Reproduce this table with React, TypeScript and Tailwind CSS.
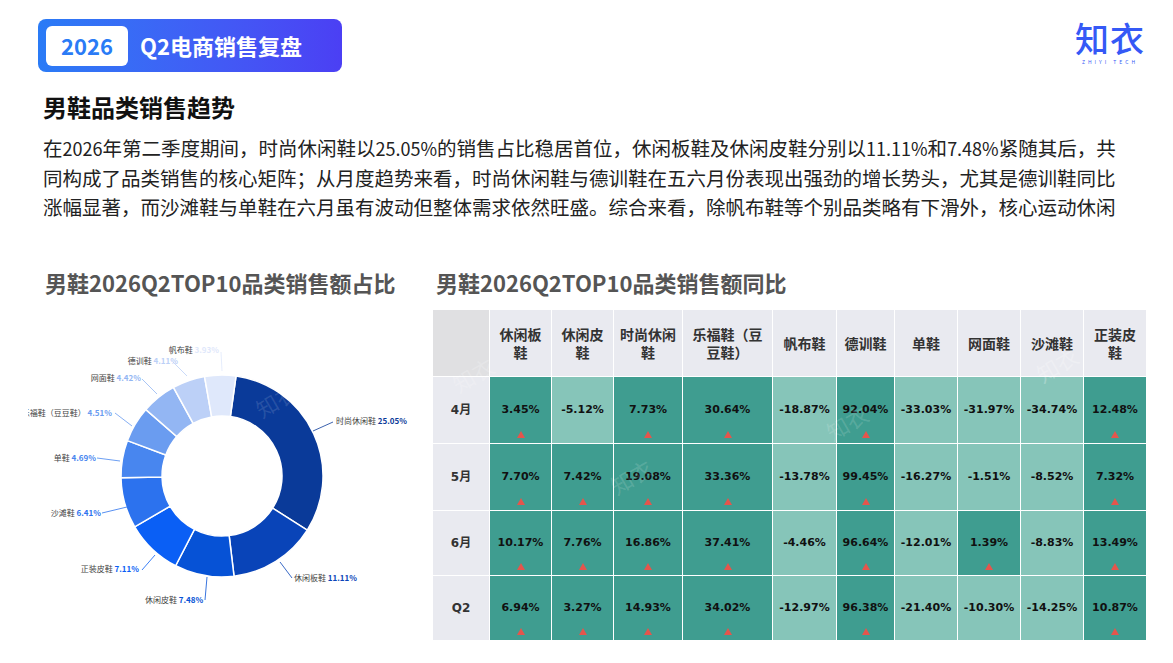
import React from 'react';

const slices = [
  { name: '时尚休闲鞋', pct: '25.05%', v: 25.05, color: '#0a3a99', lx: 336, ly: 423, anchor: 'start', line: [313, 432, 333, 423] },
  { name: '休闲板鞋', pct: '11.11%', v: 11.11, color: '#0944b8', lx: 294, ly: 580, anchor: 'start', line: [280, 563, 292, 579] },
  { name: '休闲皮鞋', pct: '7.48%', v: 7.48, color: '#0652d6', lx: 145, ly: 602, anchor: 'start', line: [207, 578, 205, 601] },
  { name: '正装皮鞋', pct: '7.11%', v: 7.11, color: '#0a5ff5', lx: 139, ly: 571, anchor: 'end', line: [155, 556, 142, 571] },
  { name: '沙滩鞋', pct: '6.41%', v: 6.41, color: '#2c72ee', lx: 101, ly: 515, anchor: 'end', line: [127, 508, 102, 514] },
  { name: '单鞋', pct: '4.69%', v: 4.69, color: '#4886ef', lx: 96, ly: 460, anchor: 'end', line: [120, 462, 97, 459] },
  { name: '乐福鞋（豆豆鞋）', pct: '4.51%', v: 4.51, color: '#6a9cf0', lx: 112, ly: 415, anchor: 'end', line: [132, 427, 115, 414] },
  { name: '网面鞋', pct: '4.42%', v: 4.42, color: '#93b6f3', lx: 141, ly: 380, anchor: 'end', line: [157, 395, 142, 380] },
  { name: '德训鞋', pct: '4.11%', v: 4.11, color: '#bcd0f7', lx: 178, ly: 363, anchor: 'end', line: [187, 377, 173, 363] },
  { name: '帆布鞋', pct: '3.93%', v: 3.93, color: '#dfe8fb', lx: 219, ly: 352, anchor: 'end', line: [222, 372, 221, 353] },
];

const pt = (cx: number, cy: number, r: number, a: number) => {
  const rad = (a * Math.PI) / 180;
  return [cx + r * Math.sin(rad), cy - r * Math.cos(rad)];
};

const arcPath = (cx: number, cy: number, R: number, r: number, a0: number, a1: number) => {
  const [x0, y0] = pt(cx, cy, R, a0);
  const [x1, y1] = pt(cx, cy, R, a1);
  const [x2, y2] = pt(cx, cy, r, a1);
  const [x3, y3] = pt(cx, cy, r, a0);
  const large = a1 - a0 > 180 ? 1 : 0;
  return `M${x0} ${y0} A${R} ${R} 0 ${large} 1 ${x1} ${y1} L${x2} ${y2} A${r} ${r} 0 ${large} 0 ${x3} ${y3} Z`;
};

const Donut = () => {
  const total = slices.reduce((s, d) => s + d.v, 0);
  let a = 8;
  const cx = 222;
  const cy = 477;
  return (
    <svg width={405} height={363} viewBox="28 300 405 363" className="block">
      {slices.map((d) => {
        const a0 = a;
        const a1 = a + (d.v / total) * 360;
        a = a1;
        return <path key={d.name} d={arcPath(cx, cy, 101, 60, a0, a1)} fill={d.color} stroke="#fff" strokeWidth={1.5} />;
      })}
      {slices.map((d) => (
        <g key={d.name + 'l'}>
          <polyline
            points={`${d.line[0]},${d.line[1]} ${d.line[2]},${d.line[3]}`}
            fill="none"
            stroke={d.color}
            strokeWidth={0.8}
          />
          <text x={d.lx} y={d.ly} textAnchor={d.anchor as 'start' | 'end'} fontSize={8} dominantBaseline="middle" fontFamily="'Noto Sans CJK SC', sans-serif">
            <tspan fill="#444">{d.name} </tspan>
            <tspan fill={d.color} fontWeight={700}>{d.pct}</tspan>
          </text>
        </g>
      ))}
      <text x={262} y={420} fontSize={22} fill="#ffffff" fillOpacity={0.12} transform="rotate(-30 262 420)" fontFamily="'Noto Sans CJK SC', sans-serif">知衣</text>
    </svg>
  );
};

const cols = ['休闲板鞋', '休闲皮鞋', '时尚休闲鞋', '乐福鞋（豆豆鞋）', '帆布鞋', '德训鞋', '单鞋', '网面鞋', '沙滩鞋', '正装皮鞋'];

const rows = [
  { label: '4月', vals: ['3.45%', '-5.12%', '7.73%', '30.64%', '-18.87%', '92.04%', '-33.03%', '-31.97%', '-34.74%', '12.48%'] },
  { label: '5月', vals: ['7.70%', '7.42%', '19.08%', '33.36%', '-13.78%', '99.45%', '-16.27%', '-1.51%', '-8.52%', '7.32%'] },
  { label: '6月', vals: ['10.17%', '7.76%', '16.86%', '37.41%', '-4.46%', '96.64%', '-12.01%', '1.39%', '-8.83%', '13.49%'] },
  { label: 'Q2', vals: ['6.94%', '3.27%', '14.93%', '34.02%', '-12.97%', '96.38%', '-21.40%', '-10.30%', '-14.25%', '10.87%'] },
];

const Heatmap = () => (
  <div className="relative">
    <div className="grid grid-cols-[56px_61px_61px_68px_89px_63px_57px_62px_62px_62px_62px] grid-rows-[66px_66px_66px_64px_64px] gap-px bg-white w-[713px]">
      <div className="bg-[#e0e0e2]" />
      {cols.map((c) => (
        <div key={c} className="bg-[#e9eaf0] flex items-center justify-center text-center px-[5px] text-[14px] leading-[18px] font-bold text-[#333]">
          {c}
        </div>
      ))}
      {rows.map((r) => (
        <React.Fragment key={r.label}>
          <div className="bg-[#e9eaf0] flex items-center justify-center text-[12px] font-bold text-[#333] font-['DejaVu_Sans','Noto_Sans_CJK_SC',sans-serif]">
            {r.label}
          </div>
          {r.vals.map((v, i) => {
            const up = !v.startsWith('-');
            return (
              <div
                key={i}
                className={`relative flex items-center justify-center text-[11px] font-bold text-[#111] font-['DejaVu_Sans',sans-serif] ${up ? 'bg-[#3f9d90]' : 'bg-[#86c5b9]'}`}
              >
                {v}
                {up && (
                  <svg width="8" height="7" viewBox="0 0 8 7" className="absolute bottom-[5px] left-1/2 -translate-x-1/2">
                    <polygon points="4,0 8,7 0,7" fill="#e5554c" />
                  </svg>
                )}
              </div>
            );
          })}
        </React.Fragment>
      ))}
    </div>
    {/* faint brand watermarks */}
    <span className="pointer-events-none absolute left-[18px] top-[48px] -rotate-[30deg] text-[22px] text-white/20">知衣</span>
    <span className="pointer-events-none absolute left-[392px] top-[96px] -rotate-[30deg] text-[22px] text-white/15">知衣</span>
    <span className="pointer-events-none absolute left-[176px] top-[150px] -rotate-[30deg] text-[22px] text-white/15">知衣</span>
    <span className="pointer-events-none absolute left-[602px] top-[38px] -rotate-[30deg] text-[22px] text-white/25">知衣</span>
  </div>
);

const N = ({ children }: { children: React.ReactNode }) => <span className="text-[18px]">{children}</span>;

export default function App() {
  return (
    <div className="w-[1173px] h-[663px] bg-white overflow-hidden font-['Noto_Sans_CJK_SC','Noto_Sans',sans-serif]">
      <div className="flex justify-between pt-[19px] pl-[38px] pr-[28px]">
        <div className="w-[304px] h-[53px] rounded-[8px] bg-gradient-to-r from-[#2a7bf6] to-[#4b3ff4] flex items-center pl-[8px]">
          <div className="w-[82px] h-[40px] bg-white rounded-[6px] flex items-center justify-center text-[22px] font-bold text-[#2a7bf6]">
            2026
          </div>
          <div className="ml-[12px] text-[22px] font-bold text-white">Q2电商销售复盘</div>
        </div>
        <div className="flex flex-col items-center pt-[2px]">
          <div className="text-[34px] leading-[34px] font-medium text-[#3559f6] tracking-[1px]">知衣</div>
          <div className="mt-[4px] text-[5px] leading-[6px] tracking-[3px] text-[#3559f6]">ZHIYI TECH</div>
        </div>
      </div>

      <div className="pl-[43px]">
        <h1 className="mt-[20px] text-[24px] leading-[30px] font-bold text-[#111]">男鞋品类销售趋势</h1>
        <p className="mt-[11px] h-[87px] text-[19.5px] leading-[29px] text-[#222]">
          <span className="whitespace-nowrap">
            在<N>2026</N>年第二季度期间，时尚休闲鞋以<N>25.05%</N>的销售占比稳居首位，休闲板鞋及休闲皮鞋分别以<N>11.11%</N>和<N>7.48%</N>紧随其后，共
          </span>
          <br />
          <span className="whitespace-nowrap">
            同构成了品类销售的核心矩阵；从月度趋势来看，时尚休闲鞋与德训鞋在五六月份表现出强劲的增长势头，尤其是德训鞋同比
          </span>
          <br />
          <span className="whitespace-nowrap">
            涨幅显著，而沙滩鞋与单鞋在六月虽有波动但整体需求依然旺盛。综合来看，除帆布鞋等个别品类略有下滑外，核心运动休闲
          </span>
        </p>
      </div>

      <div className="flex mt-[48px]">
        <div className="w-[405px] pl-[28px] box-content">
          <div className="pl-[17px] text-[22px] leading-[28px] font-bold text-[#555]">男鞋2026Q2TOP10品类销售额占比</div>
          <div className="mt-[3px]">
            <Donut />
          </div>
        </div>
        <div>
          <div className="pl-[3px] text-[22px] leading-[28px] font-bold text-[#555]">男鞋2026Q2TOP10品类销售额同比</div>
          <div className="mt-[14px]">
            <Heatmap />
          </div>
        </div>
      </div>
    </div>
  );
}
